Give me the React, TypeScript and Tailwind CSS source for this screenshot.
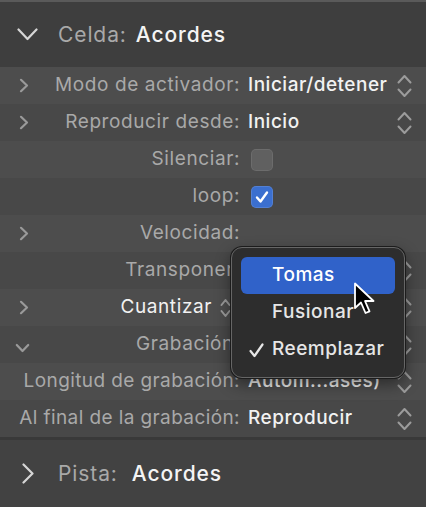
import React from 'react';

const font = { fontFamily: 'Inter, "Noto Sans", sans-serif' };

const ChevronRight = ({ className = '' }: { className?: string }) => (
    <svg width="10" height="15" viewBox="0 0 10 15" className={className}>
        <polyline points="2,1.8 8,7.5 2,13.2" fill="none" stroke="currentColor" strokeWidth="2.2" strokeLinecap="round" strokeLinejoin="round" />
    </svg>
);

const ChevronDown = ({ className = '' }: { className?: string }) => (
    <svg width="15" height="10" viewBox="0 0 15 10" className={className}>
        <polyline points="1.8,2 7.5,8 13.2,2" fill="none" stroke="currentColor" strokeWidth="2.2" strokeLinecap="round" strokeLinejoin="round" />
    </svg>
);

const Stepper = ({ className = '' }: { className?: string }) => (
    <svg width="15" height="24" viewBox="0 0 15 24" className={className}>
        <polyline points="1.5,8.5 7.5,2 13.5,8.5" fill="none" stroke="currentColor" strokeWidth="2" strokeLinecap="round" strokeLinejoin="round" />
        <polyline points="1.5,15.5 7.5,22 13.5,15.5" fill="none" stroke="currentColor" strokeWidth="2" strokeLinecap="round" strokeLinejoin="round" />
    </svg>
);

interface RowProps {
    label: React.ReactNode;
    value?: React.ReactNode;
    chevron?: 'right' | 'down';
    stepper?: boolean;
    shade: boolean;
    labelPad?: boolean;
    tight?: boolean;
}

const Row: React.FC<RowProps> = ({ label, value, chevron, stepper = true, shade, labelPad, tight }) => (
    <div className={`flex h-[37px] items-center ${shade ? 'bg-[#4d4d4d]' : 'bg-[#484848]'}`}>
        <div className={`flex w-[240px] items-center pl-[18px] ${labelPad ? 'pr-[9px]' : ''}`}>
            {chevron && (
                <div className="flex w-[16px] shrink-0 items-center text-[#9a9a9a]">
                    {chevron === 'right' && <ChevronRight className="ml-[1px]" />}
                    {chevron === 'down' && <ChevronDown className="-ml-[3px] mt-[6px]" />}
                </div>
            )}
            <div className={`flex flex-1 justify-end whitespace-nowrap text-[19px] text-[#a9a9a9] ${tight ? 'tracking-[0.4px]' : 'tracking-[0.6px]'}`}>{label}</div>
        </div>
        <div className="ml-[8px] flex-1 whitespace-nowrap text-[19px] font-medium tracking-[0.5px] text-[#f2f2f2]">{value}</div>
        {stepper && <Stepper className="mr-[14px] text-[#9c9c9c]" />}
    </div>
);

const Checkbox = ({ checked }: { checked?: boolean }) => (
    <div className="ml-[3px] flex">
        {checked ? (
            <div className="flex h-[22px] w-[22px] items-center justify-center rounded-[5px] bg-[#3b6fcf] shadow-[inset_0_0_0_1px_rgba(255,255,255,0.12)]">
                <svg width="14" height="14" viewBox="0 0 14 14">
                    <polyline points="2,7.5 5.5,11.5 12,2.5" fill="none" stroke="white" strokeWidth="2.4" strokeLinecap="round" strokeLinejoin="round" />
                </svg>
            </div>
        ) : (
            <div className="h-[22px] w-[22px] rounded-[5px] bg-[#606060] shadow-[inset_0_0_0_1px_rgba(255,255,255,0.08)]" />
        )}
    </div>
);

export default function App() {
    const rows: RowProps[] = [
        { label: 'Modo de activador:', value: 'Iniciar/detener', chevron: 'right', shade: true },
        { label: 'Reproducir desde:', value: 'Inicio', chevron: 'right', shade: false },
        { label: 'Silenciar:', value: <Checkbox />, stepper: false, shade: true },
        { label: 'loop:', value: <Checkbox checked />, stepper: false, shade: false },
        { label: 'Velocidad:', chevron: 'right', stepper: false, shade: true },
        { label: 'Transponer:', shade: false },
        {
            label: (
                <span className="inline-flex items-center gap-[8px] text-[#f2f2f2]">
                    Cuantizar
                    <svg width="11" height="20" viewBox="0 0 11 20" className="text-[#9c9c9c]">
                        <polyline points="1.5,7 5.5,2 9.5,7" fill="none" stroke="currentColor" strokeWidth="2" strokeLinecap="round" strokeLinejoin="round" />
                        <polyline points="1.5,13 5.5,18 9.5,13" fill="none" stroke="currentColor" strokeWidth="2" strokeLinecap="round" strokeLinejoin="round" />
                    </svg>
                </span>
            ),
            chevron: 'right',
            shade: true,
            labelPad: true,
        },
        { label: 'Grabación:', chevron: 'down', shade: false },
        { label: 'Longitud de grabación:', value: 'Autom...ases)', shade: true, tight: true },
        { label: 'Al final de la grabación:', value: 'Reproducir', shade: false, tight: true },
    ];

    return (
        <div className="relative h-[511px] w-[426px] overflow-hidden bg-white" style={font}>
            {/* Cell header */}
            <div className="flex h-[67px] items-center border-t-2 border-[#5a5a5a] bg-[#3e3e3e] pl-[17px]">
                <svg width="21" height="13" viewBox="0 0 21 13" className="text-[#d6d6d6]">
                    <polyline points="1.5,1.5 10.5,11 19.5,1.5" fill="none" stroke="currentColor" strokeWidth="2.2" strokeLinecap="round" strokeLinejoin="round" />
                </svg>
                <span className="ml-[20px] text-[21px] tracking-[0.9px] text-[#a9a9a9]">Celda:</span>
                <span className="ml-[9px] text-[21px] font-medium tracking-[0.9px] text-[#f4f4f4]">Acordes</span>
            </div>

            {/* Parameter rows */}
            <div className="flex flex-col">
                {rows.map((r, i) => (
                    <Row key={i} {...r} />
                ))}
            </div>

            {/* Track header */}
            <div className="flex h-[70px] items-center border-t-[3px] border-[#393939] bg-[#424242] pl-[22px]">
                <svg width="12" height="21" viewBox="0 0 12 21" className="text-[#d6d6d6]">
                    <polyline points="1.5,1.5 10.5,10.5 1.5,19.5" fill="none" stroke="currentColor" strokeWidth="2.2" strokeLinecap="round" strokeLinejoin="round" />
                </svg>
                <span className="ml-[24px] text-[21px] tracking-[0.9px] text-[#a9a9a9]">Pista:</span>
                <span className="ml-[14px] text-[21px] font-medium tracking-[0.9px] text-[#f4f4f4]">Acordes</span>
            </div>

            {/* Popup menu */}
            <div className="absolute left-[231px] top-[247px] flex h-[131px] w-[174px] flex-col rounded-[11px] border border-[#666666] bg-[#2d2d2d] p-[9px] shadow-[0_0_0_1px_#1c1c1c,0_6px_16px_rgba(0,0,0,0.45)]">
                <div className="flex h-[37px] items-center rounded-[6px] bg-[#3062c9] pl-[31px] text-[19px] font-medium tracking-[0.5px] text-white">Tomas</div>
                <div className="flex h-[37px] items-center pl-[31px] text-[19px] font-medium tracking-[0.5px] text-[#e6e6e6]">Fusionar</div>
                <div className="flex h-[37px] items-center pl-[8px] text-[19px] font-medium tracking-[0.5px] text-[#e6e6e6]">
                    <svg width="15" height="15" viewBox="0 0 15 15" className="mr-[8px] mt-[2px]">
                        <polyline points="1.5,8 5.5,13 13.5,1.5" fill="none" stroke="#e6e6e6" strokeWidth="2.2" strokeLinecap="round" strokeLinejoin="round" />
                    </svg>
                    Reemplazar
                </div>
            </div>

            {/* Mouse pointer */}
            <svg width="24" height="34" viewBox="0 0 24 34" className="absolute left-[353px] top-[282px]">
                <path d="M2 1.5 L2 26 L8 20.5 L12.5 31 L16.5 29.3 L12 19 L20.5 19 Z" fill="black" stroke="white" strokeWidth="1.8" strokeLinejoin="round" />
            </svg>
        </div>
    );
}
